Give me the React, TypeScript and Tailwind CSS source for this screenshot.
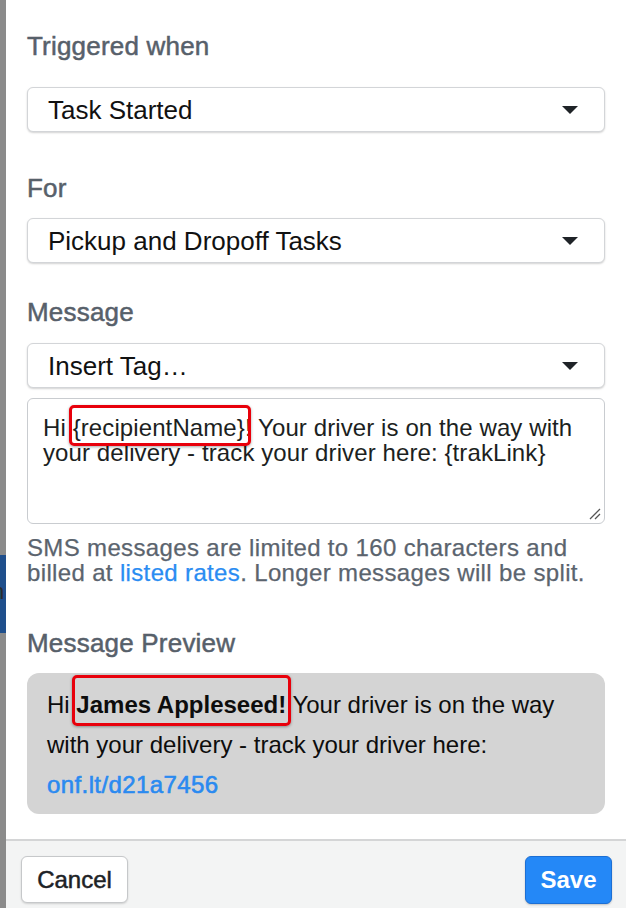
const font = "font-['Liberation_Sans',Arial,sans-serif]"

const Label = ({ children, className }: { children: React.ReactNode; className: string }) => (
  <p className={`text-[26px] leading-[30px] tracking-[0.2px] text-[#57606a] [-webkit-text-stroke:0.5px] ${className}`}>
    {children}
  </p>
)

const Select = ({ value, className }: { value: string; className: string }) => (
  <div
    className={`flex h-[45px] items-center justify-between rounded-md border border-[#d3d5d8] bg-white pl-[20px] pr-[26px] shadow-[0_1px_2px_rgba(0,0,0,0.18)] ${className}`}
  >
    <span className="text-[26px] leading-[30px] text-[#111]">{value}</span>
    <svg width="16" height="8" viewBox="0 0 16 8">
      <path d="M0 0 H16 L8 8 Z" fill="#1f2327" />
    </svg>
  </div>
)

// red annotation box drawn over the text
const Annot = ({ className }: { className: string }) => (
  <span
    className={`pointer-events-none absolute rounded-[5px] border-[3px] border-[#e8000b] shadow-[0_1px_3px_rgba(0,0,0,0.35)] ${className}`}
  />
)

export default function App() {
  return (
    <div className={`flex h-[908px] w-[626px] overflow-hidden bg-white ${font}`}>
      <div className="flex w-[6px] shrink-0 flex-col bg-[#8b8b8b]">
        <div className="h-[555px] shrink-0" />
        <div className="h-[78px] shrink-0 overflow-hidden bg-[#1f4f8c] pt-[26px]">
          <span className="-ml-[8px] block text-[22px] leading-[22px] text-[#2b2b2b]">n</span>
        </div>
      </div>

      <div className="flex flex-1 flex-col">
        <div className="flex flex-col px-[21px] pt-[31px]">
          <Label className="">Triggered when</Label>
          <Select value="Task Started" className="mt-[26px]" />

          <Label className="mt-[41px]">For</Label>
          <Select value="Pickup and Dropoff Tasks" className="mt-[15px]" />

          <Label className="mt-[34px]">Message</Label>
          <Select value="Insert Tag…" className="mt-[16px]" />

          <div className="relative mt-[10px] h-[126px] rounded-md border border-[#c9ccd0] bg-white px-[15px] pt-[16px] text-[24px] leading-[25px] tracking-[0.1px] text-[#1c1f22]">
            Hi{" "}
            <span className="relative">
              {"{recipientName}!"}
              <Annot className="-top-[9px] -bottom-[5px] -left-[4px] right-[1px]" />
            </span>{" "}
            Your driver is on the way with your delivery - track your driver here: {"{trakLink}"}
            <svg
              className="absolute bottom-[3px] right-[3px]"
              width="12"
              height="12"
              viewBox="0 0 12 12"
            >
              <path d="M1 11 L11 1 M6 11 L11 6" stroke="#555" strokeWidth="1.3" />
            </svg>
          </div>

          <p className="mt-[11px] text-[24px] leading-[25px] tracking-[0.35px] text-[#5b646e] [-webkit-text-stroke:0.25px]">
            SMS messages are limited to 160 characters and billed at{" "}
            <span className="text-[#2a8cf2]">listed rates</span>. Longer messages will be split.
          </p>

          <Label className="mt-[43px]">Message Preview</Label>

          <div className="mt-[15px] h-[141px] rounded-[12px] bg-[#d4d4d4] px-[20px] pt-[12px] text-[24px] leading-[40px] text-[#0d0d0d]">
            Hi{" "}
            <span className="relative font-bold">
              James Appleseed!
              <Annot className="-top-[16px] -bottom-[8px] -left-[4px] -right-[5px]" />
            </span>{" "}
            Your driver is on the way with your delivery - track your driver here:{" "}
            <span className="tracking-[0.4px] text-[#2a8af0] [-webkit-text-stroke:0.6px]">onf.lt/d21a7456</span>
          </div>
        </div>

        <div className="mt-[25px] flex flex-1 items-start justify-between border-t-2 border-[#d4d5d6] bg-[#f3f4f4] pl-[15px] pr-[14px] pt-[15px]">
          <button className="h-[47px] w-[107px] rounded-md border border-[#c6c8ca] bg-white text-[24px] text-[#1d2226] shadow-[0_1px_2px_rgba(0,0,0,0.15)] [-webkit-text-stroke:0.5px]">
            Cancel
          </button>
          <button className="h-[48px] w-[87px] rounded-md border border-[#1c6fd4] bg-[#2488f7] text-[24px] font-bold text-white shadow-[0_1px_2px_rgba(0,0,0,0.2)]">
            Save
          </button>
        </div>
      </div>
    </div>
  )
}
